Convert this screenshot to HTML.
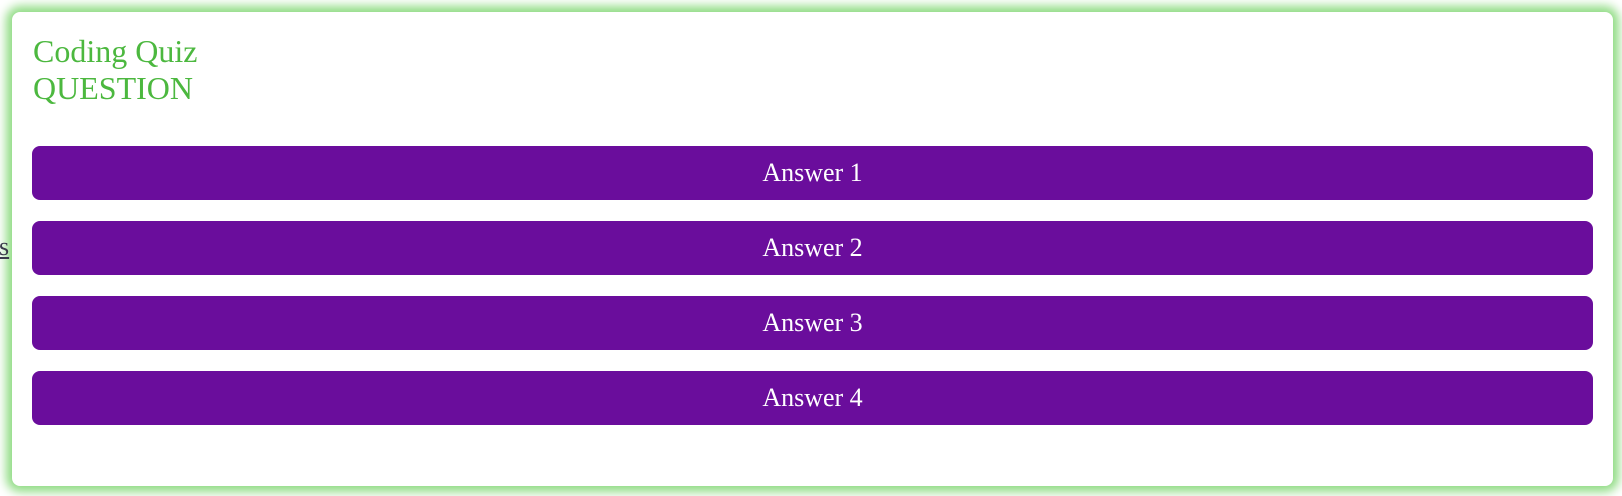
<!DOCTYPE html>
<html><head><style>
html,body{margin:0;padding:0;width:1622px;height:496px;overflow:hidden;background:#fff;font-family:"Liberation Serif",serif}
.s{position:absolute;left:-1px;top:232px;font-size:26px;line-height:30px;color:#3a3a4a;text-decoration:underline;z-index:2}
.card{position:absolute;left:12px;top:12px;width:1601px;height:474px;background:#fff;border-radius:8px;box-shadow:0 0 10px 6px #90dc84;z-index:1}
h1{position:absolute;left:21px;top:21px;margin:0;font-weight:normal;font-size:32px;line-height:37px;color:#4cb83f}
.b{position:absolute;left:20px;width:1561px;height:54px;background:#6a0d9c;border-radius:8px;color:#fff;font-size:26px;line-height:54px;text-align:center}
</style></head><body>
<div class="s">s</div>
<div class="card">
<h1>Coding Quiz<br>QUESTION</h1>
<div class="b" style="top:134px">Answer 1</div>
<div class="b" style="top:209px">Answer 2</div>
<div class="b" style="top:284px">Answer 3</div>
<div class="b" style="top:359px">Answer 4</div>
</div>
</body></html>
